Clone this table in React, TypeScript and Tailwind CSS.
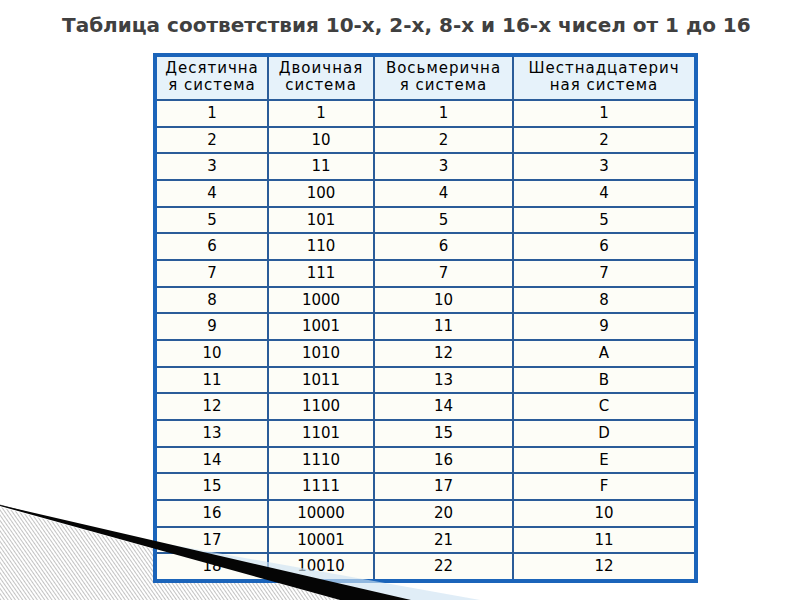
import React from 'react';

const rows: string[][] = [
  ['1', '1', '1', '1'],
  ['2', '10', '2', '2'],
  ['3', '11', '3', '3'],
  ['4', '100', '4', '4'],
  ['5', '101', '5', '5'],
  ['6', '110', '6', '6'],
  ['7', '111', '7', '7'],
  ['8', '1000', '10', '8'],
  ['9', '1001', '11', '9'],
  ['10', '1010', '12', 'A'],
  ['11', '1011', '13', 'B'],
  ['12', '1100', '14', 'C'],
  ['13', '1101', '15', 'D'],
  ['14', '1110', '16', 'E'],
  ['15', '1111', '17', 'F'],
  ['16', '10000', '20', '10'],
  ['17', '10001', '21', '11'],
  ['18', '10010', '22', '12'],
];

const headers = [
  ['Десятична', 'я система'],
  ['Двоичная', 'система'],
  ['Восьмерична', 'я система'],
  ['Шестнадцатерич', 'ная система'],
];

const App: React.FC = () => {
  return (
    <div className="relative w-[800px] h-[600px] overflow-hidden bg-white font-['DejaVu_Sans',sans-serif]">
      {/* background wedge: hatch + thin line, sits under the table */}
      <svg className="absolute left-0 top-0 w-[800px] h-[600px]" viewBox="0 0 800 600">
        <defs>
          <pattern id="hatch" width="3" height="3" patternUnits="userSpaceOnUse" patternTransform="rotate(-35)">
            <line x1="1.5" y1="-1" x2="1.5" y2="4" stroke="#9a9a9a" strokeWidth="0.6" />
          </pattern>
        </defs>
        <polygon points="0,507 340,600 0,600" fill="url(#hatch)" />
        <line x1="0" y1="505" x2="200" y2="559" stroke="#6b6b6b" strokeWidth="1" />
      </svg>

      <div className="relative">
        <h1 className="pt-[12px] pl-[62px] text-[20px] leading-[26px] font-bold text-[#404040] whitespace-nowrap">
          Таблица соответствия 10-х, 2-х, 8-х и 16-х чисел от 1 до 16
        </h1>

        <div className="mt-[15px] ml-[153px] w-[545px] border-4 border-[#1b64ba] text-[15px] text-black">
          <div className="grid grid-cols-[110px_106px_139px_182px] h-[42px] bg-[#e6f2fa]">
            {headers.map((h, i) => (
              <div
                key={i}
                className={`flex flex-col items-center justify-center pb-[2px] leading-[17px] tracking-[1px] ${i > 0 ? 'border-l-2 border-[#2a5c99]' : ''}`}
              >
                <span>{h[0]}</span>
                <span>{h[1]}</span>
              </div>
            ))}
          </div>
          {rows.map((r, ri) => (
            <div
              key={ri}
              className="grid grid-cols-[110px_106px_139px_182px] h-[26.67px] border-t-2 border-[#2a5c99] bg-[#fdfdf7]"
            >
              {r.map((c, ci) => (
                <div
                  key={ci}
                  className={`flex items-center justify-center ${ci > 0 ? 'border-l-2 border-[#2a5c99]' : ''}`}
                >
                  {c}
                </div>
              ))}
            </div>
          ))}
        </div>
      </div>

      {/* foreground wedge: light blue band and black stripe over the table */}
      <svg className="absolute left-0 top-0 w-[800px] h-[600px] pointer-events-none" viewBox="0 0 800 600">
        <polygon points="40,519 100,532 480,600 400,600" fill="#cfe3f3" fillOpacity="0.65" />
        <polygon points="0,505 411,600 340,600 0,506" fill="#050505" />
      </svg>
    </div>
  );
};

export default App;
